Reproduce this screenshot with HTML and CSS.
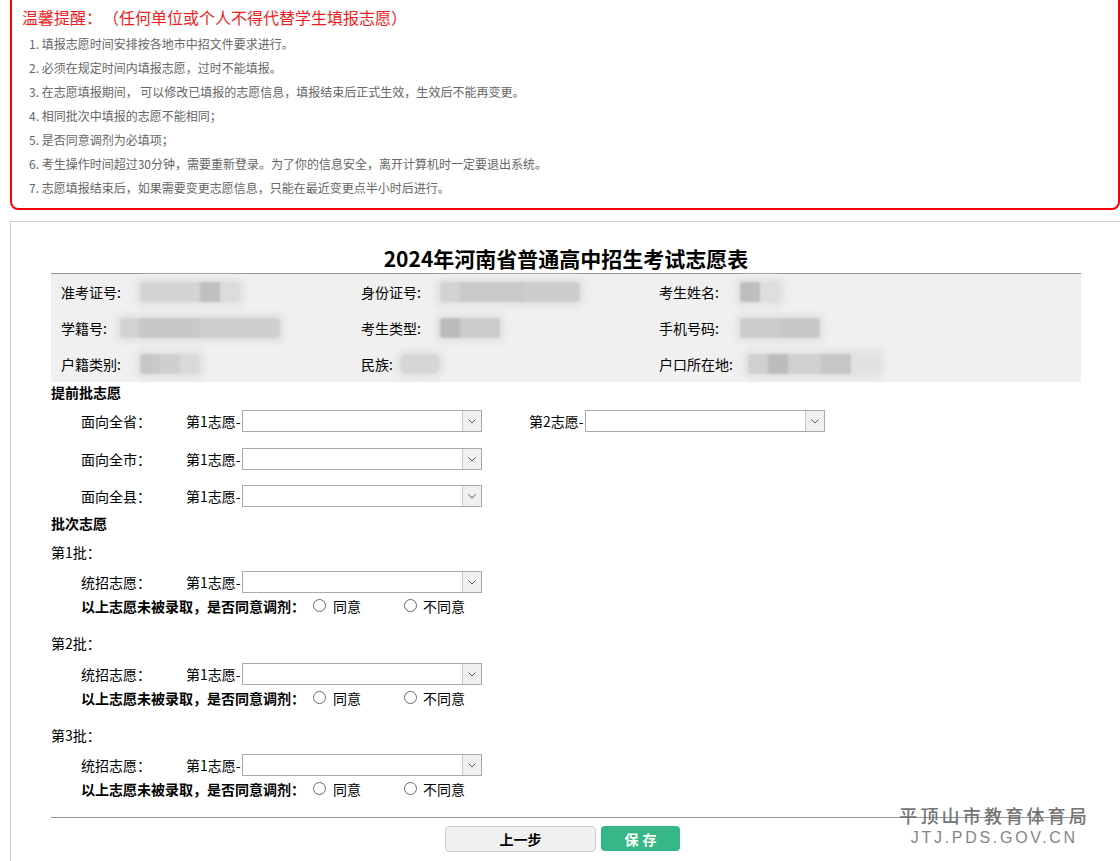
FILE: index.html
```html
<!DOCTYPE html>
<html lang="zh-CN">
<head>
<meta charset="utf-8">
<title>2024年河南省普通高中招生考试志愿表</title>
<link rel="stylesheet" href="styles.css">
</head>
<body>
<div class="notice">
  <div class="notice-title">温馨提醒：<span class="notice-sub">（任何单位或个人不得代替学生填报志愿）</span></div>
  <ul class="notice-list">
    <li>1. 填报志愿时间安排按各地市中招文件要求进行。</li>
    <li>2. 必须在规定时间内填报志愿，过时不能填报。</li>
    <li>3. 在志愿填报期间， 可以修改已填报的志愿信息，填报结束后正式生效，生效后不能再变更。</li>
    <li>4. 相同批次中填报的志愿不能相同；</li>
    <li>5. 是否同意调剂为必填项；</li>
    <li>6. 考生操作时间超过30分钟，需要重新登录。为了你的信息安全，离开计算机时一定要退出系统。</li>
    <li>7. 志愿填报结束后，如果需要变更志愿信息，只能在最近变更点半小时后进行。</li>
  </ul>
</div>

<div class="panel">
  <div class="content">
    <h1 class="form-title">2024年河南省普通高中招生考试志愿表</h1>
    <div class="info">
      <div class="cell"><span class="lbl">准考证号:</span><span class="blob b1"></span></div>
      <div class="cell"><span class="lbl">身份证号:</span><span class="blob b2"></span></div>
      <div class="cell"><span class="lbl">考生姓名:</span><span class="blob b3"></span></div>
      <div class="cell"><span class="lbl">学籍号:</span><span class="blob b4"></span></div>
      <div class="cell"><span class="lbl">考生类型:</span><span class="blob b5"></span></div>
      <div class="cell"><span class="lbl">手机号码:</span><span class="blob b6"></span></div>
      <div class="cell"><span class="lbl">户籍类别:</span><span class="blob b7"></span></div>
      <div class="cell"><span class="lbl">民族:</span><span class="blob b8"></span></div>
      <div class="cell"><span class="lbl">户口所在地:</span><span class="blob b9"></span></div>
    </div>

    <div class="sec-title">提前批志愿</div>
    <div class="row row-first">
      <span class="row-label">面向全省：</span>
      <span class="choice"><span class="choice-label">第1志愿-</span><span class="select"><span class="arrow"><svg width="8" height="5" viewBox="0 0 8 5"><polyline points="0.5,0.5 4,4 7.5,0.5" fill="none" stroke="#555" stroke-width="1"/></svg></span></span></span>
      <span class="choice choice-2"><span class="choice-label">第2志愿-</span><span class="select"><span class="arrow"><svg width="8" height="5" viewBox="0 0 8 5"><polyline points="0.5,0.5 4,4 7.5,0.5" fill="none" stroke="#555" stroke-width="1"/></svg></span></span></span>
    </div>
    <div class="row row-next">
      <span class="row-label">面向全市：</span>
      <span class="choice"><span class="choice-label">第1志愿-</span><span class="select"><span class="arrow"><svg width="8" height="5" viewBox="0 0 8 5"><polyline points="0.5,0.5 4,4 7.5,0.5" fill="none" stroke="#555" stroke-width="1"/></svg></span></span></span>
    </div>
    <div class="row row-last">
      <span class="row-label">面向全县：</span>
      <span class="choice"><span class="choice-label">第1志愿-</span><span class="select"><span class="arrow"><svg width="8" height="5" viewBox="0 0 8 5"><polyline points="0.5,0.5 4,4 7.5,0.5" fill="none" stroke="#555" stroke-width="1"/></svg></span></span></span>
    </div>

    <div class="sec-title sec-title-2">批次志愿</div>

    <div class="batch batch-first">第1批：</div>
    <div class="row row-choice">
      <span class="row-label">统招志愿：</span>
      <span class="choice"><span class="choice-label">第1志愿-</span><span class="select"><span class="arrow"><svg width="8" height="5" viewBox="0 0 8 5"><polyline points="0.5,0.5 4,4 7.5,0.5" fill="none" stroke="#555" stroke-width="1"/></svg></span></span></span>
    </div>
    <div class="adjust">
      <span class="adjust-q">以上志愿未被录取，是否同意调剂：</span>
      <span class="radio radio-yes"></span><span class="radio-text">同意</span>
      <span class="radio radio-no"></span><span class="radio-text">不同意</span>
    </div>

    <div class="batch">第2批：</div>
    <div class="row row-choice row-choice-2">
      <span class="row-label">统招志愿：</span>
      <span class="choice"><span class="choice-label">第1志愿-</span><span class="select"><span class="arrow"><svg width="8" height="5" viewBox="0 0 8 5"><polyline points="0.5,0.5 4,4 7.5,0.5" fill="none" stroke="#555" stroke-width="1"/></svg></span></span></span>
    </div>
    <div class="adjust">
      <span class="adjust-q">以上志愿未被录取，是否同意调剂：</span>
      <span class="radio radio-yes"></span><span class="radio-text">同意</span>
      <span class="radio radio-no"></span><span class="radio-text">不同意</span>
    </div>

    <div class="batch">第3批：</div>
    <div class="row row-choice">
      <span class="row-label">统招志愿：</span>
      <span class="choice"><span class="choice-label">第1志愿-</span><span class="select"><span class="arrow"><svg width="8" height="5" viewBox="0 0 8 5"><polyline points="0.5,0.5 4,4 7.5,0.5" fill="none" stroke="#555" stroke-width="1"/></svg></span></span></span>
    </div>
    <div class="adjust">
      <span class="adjust-q">以上志愿未被录取，是否同意调剂：</span>
      <span class="radio radio-yes"></span><span class="radio-text">同意</span>
      <span class="radio radio-no"></span><span class="radio-text">不同意</span>
    </div>

    <div class="divider"></div>
    <div class="btns">
      <button class="btn btn-prev" type="button">上一步</button>
      <button class="btn btn-save" type="button">保存</button>
    </div>
  </div>
</div>

<div class="watermark">
  <div class="wm-cn">平顶山市教育体育局</div>
  <div class="wm-en">JTJ.PDS.GOV.CN</div>
</div>
</body>
</html>
```

FILE: styles.css
```css
html, body {
  margin: 0;
  padding: 0;
}
body {
  font-family: "Microsoft YaHei", "Noto Sans CJK SC", sans-serif;
  color: #000;
  background: #fff;
  overflow: hidden;
  position: relative;
  height: 861px;
}

/* notice */
.notice {
  margin: -10px 0 0 10px;
  border: 2px solid #f00;
  border-radius: 8px;
  padding: 14px 0 8px 10px;
}
.notice-title {
  font-size: 16px;
  line-height: 22px;
  color: #f21c1c;
}
.notice-sub {
  margin-left: 9px;
}
.notice-list {
  list-style: none;
  margin: 4px 0 0;
  padding: 0 0 0 7px;
  font-size: 12px;
  line-height: 24px;
  color: #666;
}

/* panel */
.panel {
  margin: 11px -20px 0 10px;
  border: 1px solid #ccc;
  padding: 22px 0 40px 40px;
}
.content {
  width: 1030px;
}
.form-title {
  margin: 0 0 1px;
  font-size: 21px;
  line-height: 28px;
  font-weight: bold;
  text-align: center;
}

.info {
  border-top: 1px solid #999;
  background: #f0f0f0;
  display: grid;
  grid-template-columns: 300px 298px 1fr;
  grid-auto-rows: 36px;
  padding-left: 10px;
  font-size: 14px;
}
.cell {
  display: flex;
  align-items: center;
}
.blob {
  display: inline-block;
  height: 20px;
  filter: blur(0.8px);
  box-shadow: 0 0 5px 5px rgba(226, 226, 226, 0.85);
  border-radius: 3px;
}
.b1 { margin-left: 19px; width: 100px; background: linear-gradient(to right, #d3d3d3 0 60%, #c1bfc1 60% 80%, #dcdcdc 80%); }
.b2 { margin-left: 19px; width: 140px; background: linear-gradient(to right, #d2d2d2 0 14%, #c9c9c9 14% 60%, #cdcdcd 60%); }
.b3 { margin-left: 21px; width: 40px; background: linear-gradient(to right, #bebebe 0 50%, #dedede 50%); }
.b4 { margin-left: 13px; width: 160px; background: linear-gradient(to right, #d2d2d2 0 12%, #c8c8c8 12% 50%, #cfcfcf 50%); }
.b5 { margin-left: 19px; width: 60px; background: linear-gradient(to right, #bcbabd 0 33%, #cbcbcb 33%); }
.b6 { margin-left: 21px; width: 80px; background: linear-gradient(to right, #cccccc 0 50%, #c9c8c8 50%); }
.b7 { margin-left: 19px; width: 60px; background: linear-gradient(to right, #c8c8c8 0 33%, #cfcfcf 33% 66%, #dadada 66%); }
.b8 { margin-left: 7px; width: 40px; background: #d6d6d6; border-radius: 8px; }
.b9 { margin-left: 15px; width: 132px; background: linear-gradient(to right, #d0d0d0 0 15%, #bdbbbc 15% 30%, #d0d0d0 30% 55%, #c8c6c8 55% 78%, #e2e2e2 78%); }

/* form */
.sec-title {
  font-size: 14px;
  font-weight: bold;
  line-height: 21px;
}
.sec-title-2 { margin-top: 6px; }

.row {
  display: flex;
  align-items: center;
  height: 22px;
  padding-left: 30px;
  font-size: 14px;
}
.row-first { margin-top: 7px; }
.row-next { margin-top: 16px; }
.row-last { margin-top: 15px; }
.row-choice { margin-top: 8px; }
.row-choice-2 { margin-top: 9px; }
.row-label {
  width: 105px;
}
.choice {
  display: flex;
  align-items: center;
}
.choice-2 { margin-left: 47px; }
.choice-label {
  width: 56px;
  white-space: nowrap;
}
.select {
  width: 240px;
  height: 22px;
  box-sizing: border-box;
  border: 1px solid #a9a9a9;
  background: #fff;
  display: flex;
  justify-content: flex-end;
}
.arrow {
  width: 18px;
  border-left: 1px solid #c8c8c8;
  background: #f0f0f0;
  display: flex;
  align-items: center;
  justify-content: center;
}

.batch {
  font-size: 14px;
  line-height: 21px;
  margin-top: 17px;
}
.batch-first { margin-top: 8px; }

.adjust {
  margin-top: 2px;
  padding-left: 30px;
  display: flex;
  align-items: center;
  height: 21px;
  font-size: 14px;
}
.adjust-q {
  font-weight: bold;
  width: 224px;
  white-space: nowrap;
}
.radio {
  width: 13px;
  height: 13px;
  box-sizing: border-box;
  border: 1px solid #6a6a6a;
  border-radius: 50%;
  background: #fff;
}
.radio-yes { margin-left: 8px; }
.radio-no { margin-left: 43px; }
.radio-text { margin-left: 6px; }
.radio-yes + .radio-text { width: 28px; margin-left: 7px; }

.divider {
  margin-top: 18px;
  border-top: 1px solid #939393;
}
.btns {
  display: flex;
  gap: 5px;
  padding-left: 394px;
  margin-top: 8px;
}
.btn {
  font-family: "Microsoft YaHei", "Noto Sans CJK SC", sans-serif;
  font-size: 14px;
  font-weight: bold;
  border-radius: 4px;
  padding: 0;
  cursor: pointer;
}
.btn-prev {
  width: 151px;
  height: 26px;
  border: 1px solid #cfcfcf;
  background: #f0f0f0;
  color: #000;
}
.btn-save {
  width: 79px;
  height: 25px;
  border: none;
  background: #36b886;
  color: #fff;
  letter-spacing: 4px;
  text-indent: 4px;
}

/* watermark overlay */
.watermark {
  position: absolute;
  left: 882px;
  top: 803px;
  width: 222px;
  text-align: center;
  color: #747474;
  pointer-events: none;
}
.wm-cn {
  font-family: "Noto Sans CJK SC", sans-serif;
  font-size: 18px;
  font-weight: 500;
  line-height: 24px;
  letter-spacing: 3.2px;
  text-indent: 3.2px;
}
.wm-en {
  font-family: "Liberation Sans", sans-serif;
  font-size: 16px;
  line-height: 22px;
  letter-spacing: 2.7px;
  text-indent: 2.7px;
  color: #858585;
}
```
